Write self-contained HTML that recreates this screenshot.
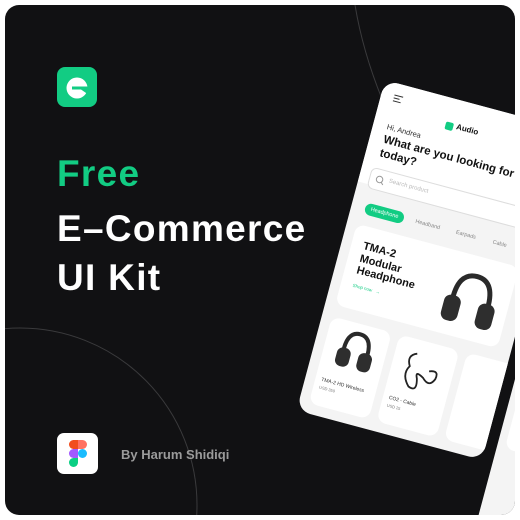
<!DOCTYPE html>
<html><head><meta charset="utf-8"><style>
*{margin:0;padding:0;box-sizing:border-box}
html,body{width:520px;height:520px;overflow:hidden}
body{background:#fff;position:relative;font-family:"Liberation Sans",sans-serif}
.card{position:absolute;left:5px;top:5px;width:510px;height:510px;background:#111113;border-radius:14px;overflow:hidden}
.t{position:absolute;left:52px;font-weight:bold;font-size:37px;letter-spacing:1.3px;color:#fff;white-space:nowrap}
.phone{position:absolute;left:380px;top:75px;width:192px;height:342px;background:#f4f4f4;border-radius:14px;transform-origin:0 0;transform:rotate(15deg);overflow:hidden}
.p2{position:absolute;left:380px;top:75px;width:192px;height:420px;transform-origin:0 0;transform:rotate(15deg) translate(203px,215px);background:#f4f4f4;border-radius:14px;overflow:hidden}
.a{position:absolute;white-space:nowrap}
.w{background:#fff;border-radius:9px;position:absolute}
</style></head><body>
<div class="card">
<svg width="510" height="510" style="position:absolute;left:0;top:0">
<circle cx="15" cy="500" r="177" fill="none" stroke="#3a3a3c" stroke-width="1"/>
<path d="M350 0 Q375 150 520 310" fill="none" stroke="#3a3a3c" stroke-width="1"/>
</svg>
<div style="position:absolute;left:52px;top:62px;width:40px;height:40px;background:#12cc83;border-radius:8px">
<svg width="40" height="40"><circle cx="20" cy="21" r="10.5" fill="#fff"/><rect x="15" y="19.5" width="17" height="3" fill="#12cc83"/><path d="M24 22.5 L32 22.5 L32 28 Z" fill="#12cc83"/></svg>
</div>
<div class="t" style="top:148px;color:#12cc83">Free</div>
<div class="t" style="top:203px">E–Commerce</div>
<div class="t" style="top:252px">UI Kit</div>
<div style="position:absolute;left:52px;top:428px;width:41px;height:41px;background:#fff;border-radius:7px">
<svg width="41" height="41"><rect x="12" y="7" width="9" height="9" rx="4.5" fill="#f24e1e"/><rect x="16" y="7" width="5" height="9" fill="#f24e1e"/><circle cx="25.5" cy="11.5" r="4.5" fill="#ff7262"/><rect x="21" y="7" width="4.5" height="9" fill="#ff7262"/><rect x="12" y="16" width="9" height="9" rx="4.5" fill="#a259ff"/><rect x="16" y="16" width="5" height="9" fill="#a259ff"/><circle cx="25.5" cy="20.5" r="4.5" fill="#1abcfe"/><path d="M16.5 25 H21 V29.5 A4.5 4.5 0 1 1 16.5 25 Z" fill="#0acf83"/></svg>
</div>
<div style="position:absolute;left:116px;top:442px;color:#9b9b9b;font-size:13px;font-weight:bold">By Harum Shidiqi</div>

<div class="p2"><div class="w" style="left:8px;top:20px;width:170px;height:90px"></div>
<svg class="a" style="left:5px;top:40px" width="40" height="50"><path d="M10 40 Q12 20 22 18" stroke="#222" stroke-width="5" fill="none"/></svg></div>

<div class="phone">
<div style="position:absolute;left:0;top:0;width:100%;height:105px;background:#fff"></div>
<svg class="a" style="left:12px;top:10px" width="12" height="10"><path d="M1 2h9M1 5h6M1 8h8" stroke="#333" stroke-width="1"/></svg>
<div class="a" style="left:70px;top:24px;width:8px;height:8px;background:#12cc83;border-radius:2px"></div>
<div class="a" style="left:81px;top:22px;font-size:8px;font-weight:bold;color:#111">Audio</div>
<div class="a" style="left:14px;top:40px;font-size:7.5px;color:#333">Hi, Andrea</div>
<div class="a" style="left:14px;top:51px;font-size:11.5px;font-weight:bold;color:#111;line-height:14px">What are you looking for<br>today?</div>
<div class="a" style="left:10px;top:87px;width:172px;height:22px;border:1px solid #ddd;border-radius:6px;background:#fff"></div>
<svg class="a" style="left:16px;top:93px" width="10" height="10"><circle cx="4.5" cy="4.5" r="3.2" stroke="#999" fill="none"/><path d="M7 7l2 2" stroke="#999"/></svg>
<div class="a" style="left:30px;top:94px;font-size:6px;color:#bbb">Search product</div>
<div class="a" style="left:14px;top:123px;width:40px;height:12px;background:#12cc83;border-radius:6px;color:#fff;font-size:5.5px;text-align:center;line-height:12px">Headphone</div>
<div class="a" style="left:66px;top:126px;font-size:5.5px;color:#888">Headband</div>
<div class="a" style="left:108px;top:126px;font-size:5.5px;color:#888">Earpads</div>
<div class="a" style="left:146px;top:126px;font-size:5.5px;color:#888">Cable</div>
<div class="w" style="left:10px;top:146px;width:168px;height:84px"></div>
<div class="a" style="left:22px;top:160px;font-size:11px;font-weight:bold;color:#111;line-height:12.5px">TMA-2<br>Modular<br>Headphone</div>
<div class="a" style="left:22px;top:204px;font-size:4.5px;color:#12cc83">Shop now &nbsp;&nbsp;→</div>
<svg class="a" style="left:108px;top:160px" width="60" height="60"><path d="M14 38 Q12 6 32 6 Q52 6 50 38" stroke="#2a2a2a" stroke-width="5" fill="none"/><rect x="6" y="30" width="17" height="26" rx="7" fill="#2e2e2e"/><rect x="41" y="30" width="17" height="26" rx="7" fill="#2e2e2e"/></svg>
<div class="w" style="left:10px;top:242px;width:62px;height:90px"></div>
<div class="w" style="left:80px;top:242px;width:62px;height:90px"></div>
<div class="w" style="left:150px;top:242px;width:62px;height:90px"></div>
<svg class="a" style="left:20px;top:248px" width="44" height="44"><path d="M10 28 Q8 4 22 4 Q36 4 34 28" stroke="#2a2a2a" stroke-width="4" fill="none"/><rect x="4" y="21" width="14" height="19" rx="6" fill="#2e2e2e"/><rect x="26" y="21" width="14" height="19" rx="6" fill="#2e2e2e"/></svg>
<div class="a" style="left:16px;top:303px;font-size:5px;color:#333">TMA-2 HD Wireless</div>
<div class="a" style="left:16px;top:311px;font-size:4px;color:#777">USD 350</div>
<svg class="a" style="left:88px;top:250px" width="46" height="50"><path d="M14 6 Q4 10 10 20 Q4 30 14 40 Q24 44 20 30 Q16 22 26 28 Q34 36 38 26 Q40 16 30 20" stroke="#222" stroke-width="1.8" fill="none"/></svg>
<div class="a" style="left:86px;top:303px;font-size:5px;color:#333">CO2 - Cable</div>
<div class="a" style="left:86px;top:311px;font-size:4px;color:#777">USD 25</div>
</div>
</div>
</body></html>
